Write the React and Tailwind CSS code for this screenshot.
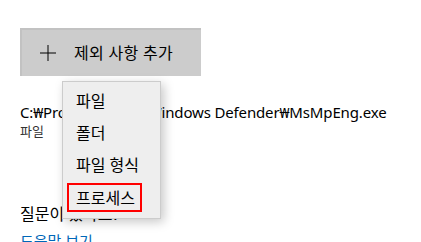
export default function App() {
  const font = { fontFamily: '"Noto Sans", "Noto Sans CJK KR", sans-serif' };
  return (
    <div className="relative w-[421px] h-[242px] overflow-hidden bg-white text-black" style={font}>
      <div className="pl-[20px] pt-[28px] flex flex-col">
        <div className="w-[181px] h-[48px] bg-[#cccccc] flex items-center border-t-2 border-l-2 border-t-[#c2c2c2] border-l-[#c2c2c2]">
          <svg width="16" height="16" viewBox="0 0 16 16" className="ml-[18px]">
            <path d="M8 0V16M0 8H16" stroke="#000" strokeWidth="1" fill="none" />
          </svg>
          <span className="ml-[18px] text-[16px] leading-none tracking-[0.3px]">제외 사항 추가</span>
        </div>
        <div className="mt-[26px] text-[15px] leading-[20px] tracking-[-0.15px]">C:₩Program Files₩Windows Defender₩MsMpEng.exe</div>
        <div className="text-[13px] leading-[18px] text-[#333]">파일</div>
        <div className="mt-[63px] text-[16px] leading-[22px]">질문이 있나요?</div>
        <div className="mt-[6px] text-[15px] leading-[20px] text-[#0067b8]">도움말 보기</div>
      </div>
      <div className="absolute left-[62px] top-[81px] w-[99px] h-[138px] bg-[#eeeeee] border border-[#cccccc] shadow-[3px_3px_10px_rgba(0,0,0,0.22)] flex flex-col pt-[3px]">
        <div className="h-[32px] flex items-center pl-[13px] text-[16px]">파일</div>
        <div className="h-[32px] flex items-center pl-[13px] text-[16px]">폴더</div>
        <div className="h-[32px] flex items-center pl-[13px] text-[16px]">파일 형식</div>
        <div className="h-[32px] flex items-center pl-[4px] pt-[1px]">
          <div className="h-[29px] w-[75px] border-2 border-[#ff0000] flex items-center pl-[7px] text-[16px]">프로세스</div>
        </div>
      </div>
    </div>
  );
}
